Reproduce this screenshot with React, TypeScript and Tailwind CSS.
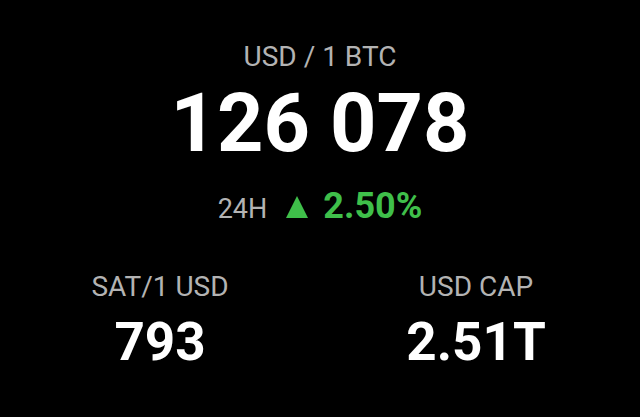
export default function App() {
  return (
    <div
      className="w-[640px] h-[417px] bg-black text-white flex flex-col items-center"
      style={{ fontFamily: 'Roboto, "Liberation Sans", sans-serif' }}
    >
      <div className="mt-[43px] text-[28px] leading-none text-[#b3b3b3]">USD / 1 BTC</div>
      <div className="mt-[12px] text-[81px] leading-none font-bold">126 078</div>
      <div className="mt-[24px] flex items-baseline leading-none">
        <span className="text-[27px] text-[#b3b3b3]">24H</span>
        <svg className="ml-[19px]" width="22" height="22" viewBox="0 0 22 22">
          <path d="M11 0L22 22H0Z" fill="#3fbf4a" />
        </svg>
        <span className="ml-[15px] text-[36px] font-bold text-[#3fbf4a]">2.50%</span>
      </div>
      <div className="mt-[49px] grid grid-cols-2 w-full">
        <div className="flex flex-col items-center">
          <div className="text-[28px] leading-none text-[#b3b3b3]">SAT/1 USD</div>
          <div className="mt-[15px] text-[53px] leading-none font-bold">793</div>
        </div>
        <div className="flex flex-col items-center pr-[8px]">
          <div className="text-[28px] leading-none text-[#b3b3b3]">USD CAP</div>
          <div className="mt-[15px] text-[53px] leading-none font-bold">2.51T</div>
        </div>
      </div>
    </div>
  );
}
